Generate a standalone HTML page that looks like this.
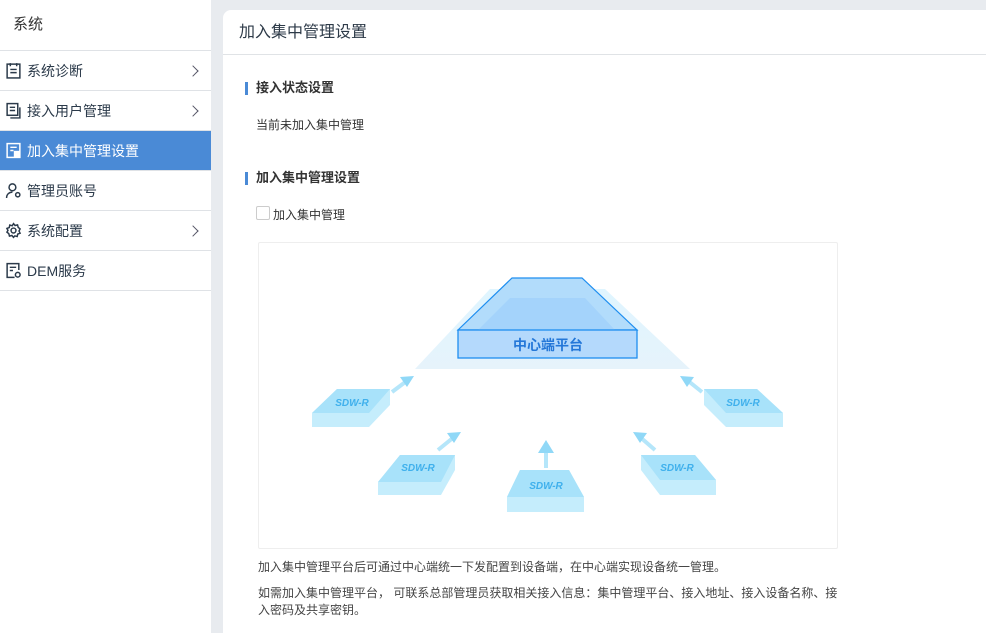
<!DOCTYPE html>
<html><head><meta charset="utf-8"><style>
*{margin:0;padding:0;box-sizing:border-box}
html,body{width:986px;height:633px;overflow:hidden}
body{background:#e8ebef;font-family:"Liberation Sans","Noto Sans CJK SC",sans-serif;position:relative;color:#333}
.side{position:absolute;left:0;top:0;width:211px;height:633px;background:#fff}
.side .t{height:51px;line-height:50px;padding-left:13px;font-size:15px;color:#333;border-bottom:1px solid #dfe2e6}
.it{height:40px;border-bottom:1px solid #dfe2e6;display:flex;align-items:center;padding-left:5px;font-size:14px;color:#2b3a4a;position:relative}
.it svg{margin-right:5px}
.it.act{background:#4a8ad6;color:#fff}
.it .ar{position:absolute;right:14px;top:16px;width:8px;height:8px;border-right:1.3px solid #556;border-top:1.3px solid #556;transform:rotate(45deg)}
.card{position:absolute;left:223px;top:10px;width:780px;height:623px;background:#fff;border-radius:8px 8px 0 0}
.card .h{height:45px;line-height:46px;padding-left:16px;font-size:16px;color:#2d3a48;border-bottom:1px solid #e0e3e6}
.sec{position:absolute;left:22px;font-size:13px;font-weight:bold;color:#333;padding-left:11px;line-height:16px}
.sec:before{content:"";position:absolute;left:0;top:2px;width:3px;height:13px;background:#4a8ad6}
.tx{position:absolute;font-size:12px;color:#333}
.cb{position:absolute;left:33px;top:196px;width:14px;height:14px;border:1px solid #ccc;border-radius:2px}
.img{position:absolute;left:35px;top:232px;width:580px;height:307px;border:1px solid #eee;border-radius:2px}
.p{position:absolute;left:35px;font-size:12px;color:#444;line-height:17px;width:590px}
</style></head><body>
<div class="side">
<div class="t">系统</div>
<div class="it"><svg width="17" height="17" viewBox="0 0 16 16" fill="none" stroke="#2b3a4a" stroke-width="1.4"><rect x="2" y="2" width="12" height="13"/><path d="M5 1v3M11 1v3M5 7h6M5 10h6"/></svg>系统诊断<span class="ar"></span></div>
<div class="it"><svg width="17" height="17" viewBox="0 0 16 16" fill="none" stroke="#2b3a4a" stroke-width="1.4"><rect x="2" y="1.5" width="10" height="11"/><path d="M5 15h9V5M4.5 5h5M4.5 8h5"/></svg>接入用户管理<span class="ar"></span></div>
<div class="it act"><svg width="17" height="17" viewBox="0 0 16 16" fill="none" stroke="#fff" stroke-width="1.4"><rect x="2" y="1.5" width="12" height="13"/><path d="M5 5h6M5 8h3"/><rect x="9" y="9" width="4" height="5" fill="#fff"/></svg>加入集中管理设置</div>
<div class="it"><svg width="17" height="17" viewBox="0 0 16 16" fill="none" stroke="#2b3a4a" stroke-width="1.4"><circle cx="7" cy="5" r="3.2"/><path d="M1.5 15c0-3.5 2.5-5.5 5.5-5.5"/><circle cx="12" cy="12" r="2"/></svg>管理员账号</div>
<div class="it"><svg width="17" height="17" viewBox="0 0 16 16" fill="none" stroke="#2b3a4a" stroke-width="1.4"><circle cx="8" cy="8" r="2.3"/><path d="M8 1.5l1.5 1.8 2.3-.6.6 2.3 1.8 1.5-1 2 1 2-2.2.8-.5 2.3-2.3-.5L8 14.5l-1.5-1.8-2.3.6-.6-2.3L1.8 9.5l1-1.5-1-2 2.2-.8.5-2.3 2.3.6z"/></svg>系统配置<span class="ar"></span></div>
<div class="it"><svg width="17" height="17" viewBox="0 0 16 16" fill="none" stroke="#2b3a4a" stroke-width="1.4"><path d="M9 14.5H2V1.5h11v6"/><path d="M4.5 5h6M4.5 8h3"/><circle cx="12" cy="12" r="2.2"/></svg>DEM服务</div>
</div>
<div class="card">
<div class="h">加入集中管理设置</div>
<div class="sec" style="top:70px">接入状态设置</div>
<div class="tx" style="left:33px;top:106px">当前未加入集中管理</div>
<div class="sec" style="top:160px">加入集中管理设置</div>
<div class="cb"></div>
<div class="tx" style="left:50px;top:196px">加入集中管理</div>
<div class="img">
<svg width="580" height="307" viewBox="258 242 580 307" style="position:absolute;left:-1px;top:-1px">
<defs>
<linearGradient id="gl" x1="0" y1="0" x2="0" y2="1"><stop offset="0" stop-color="#dff5ff"/><stop offset="1" stop-color="#e6f3fb"/></linearGradient>
</defs>
<polygon points="490,289 605,289 690,369 415,369" fill="url(#gl)"/>
<polygon points="512,278 582,278 637,330 458,330" fill="#b2dcfb" stroke="#1e8ef0" stroke-width="1.2"/>
<polygon points="510,298 585,298 615,330 478,330" fill="#a4d3fb"/>
<rect x="458" y="330" width="179" height="28" fill="#b4d9fc" stroke="#1e8ef0" stroke-width="1.3"/>
<text x="548" y="350" font-size="14" font-weight="bold" fill="#2477d8" text-anchor="middle" font-family="Liberation Sans,Noto Sans CJK SC,sans-serif">中心端平台</text>
<g fill="#c5edfc">
<polygon points="337,389 390,389 390,405 369,427 312,427 312,413"/>
<polygon points="400,455 455,455 455,470 441,495 378,495 378,482"/>
<polygon points="520,470 569,470 584,497 584,512 507,512 507,497"/>
<polygon points="641,455 695,455 716,480 716,495 660,495 641,470"/>
<polygon points="704,389 757,389 783,413 783,427 726,427 704,405"/>
</g>
<g fill="#a8e2fa">
<polygon points="337,389 390,389 369,413 312,413"/>
<polygon points="400,455 455,455 441,482 378,482"/>
<polygon points="520,470 569,470 584,497 507,497"/>
<polygon points="641,455 695,455 716,480 660,480"/>
<polygon points="704,389 757,389 783,413 726,413"/>
</g>
<g font-size="10" font-weight="bold" fill="#3fb0ec" font-style="italic" font-family="Liberation Sans,sans-serif" text-anchor="middle">
<text x="352" y="406">SDW-R</text><text x="418" y="471">SDW-R</text><text x="546" y="489">SDW-R</text><text x="677" y="471">SDW-R</text><text x="743" y="406">SDW-R</text>
</g>
<g stroke="#b5e6fa" stroke-width="4" fill="none">
<path d="M392 392L408 380M438 450L454 437M546 468V452M655 450L640 437M702 392L687 380"/>
</g>
<g fill="#90d8f7">
<polygon points="414,376 400,377 407,387"/>
<polygon points="461,432 447,433 454,443"/>
<polygon points="546,440 538,453 554,453"/>
<polygon points="633,432 647,433 640,443"/>
<polygon points="680,376 694,377 687,387"/>
</g>
</svg>
</div>
<div class="p" style="top:549px">加入集中管理平台后可通过中心端统一下发配置到设备端，在中心端实现设备统一管理。</div>
<div class="p" style="top:575px">如需加入集中管理平台， 可联系总部管理员获取相关接入信息：集中管理平台、接入地址、接入设备名称、接入密码及共享密钥。</div>
</div>
</body></html>
